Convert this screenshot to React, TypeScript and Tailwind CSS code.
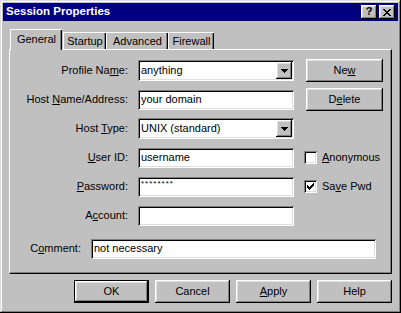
import React from "react";

const raised =
  "shadow-[inset_-1px_-1px_#000,inset_1px_1px_#fff,inset_-2px_-2px_#808080,inset_2px_2px_#dfdfdf]";
const sunken =
  "shadow-[inset_1px_1px_#808080,inset_-1px_-1px_#fff,inset_2px_2px_#000,inset_-2px_-2px_#dfdfdf]";

function U({ c }: { c: string }) {
  return <span className="underline underline-offset-1">{c}</span>;
}

function Pixels({ w, h, px }: { w: number; h: number; px: [number, number][] }) {
  return (
    <svg width={w} height={h} viewBox={`0 0 ${w} ${h}`} shapeRendering="crispEdges">
      {px.map(([x, y], i) => (
        <rect key={i} x={x} y={y} width={1} height={1} fill="#000" />
      ))}
    </svg>
  );
}

const arrowPx: [number, number][] = [];
[7, 5, 3, 1].forEach((n, r) => {
  for (let i = 0; i < n; i++) arrowPx.push([r + i, r]);
});

const closePx: [number, number][] = [
  [0, 0], [1, 0], [6, 0], [7, 0],
  [1, 1], [2, 1], [5, 1], [6, 1],
  [2, 2], [3, 2], [4, 2], [5, 2],
  [3, 3], [4, 3],
  [2, 4], [3, 4], [4, 4], [5, 4],
  [1, 5], [2, 5], [5, 5], [6, 5],
  [0, 6], [1, 6], [6, 6], [7, 6],
];

const checkPx: [number, number][] = [
  [6, 0],
  [5, 1], [6, 1],
  [0, 2], [4, 2], [5, 2], [6, 2],
  [0, 3], [1, 3], [3, 3], [4, 3], [5, 3],
  [0, 4], [1, 4], [2, 4], [3, 4], [4, 4],
  [1, 5], [2, 5], [3, 5],
  [2, 6],
];

function Edit({ children, w = "w-[156px]" }: { children?: React.ReactNode; w?: string }) {
  return (
    <div className={`flex h-[20px] items-center bg-white pl-[3px] ${sunken} ${w}`}>
      {children}
    </div>
  );
}

function Combo({ value }: { value: string }) {
  return (
    <div className={`flex h-[21px] w-[156px] bg-white p-[2px] ${sunken}`}>
      <div className="flex flex-1 items-center pl-[1px]">{value}</div>
      <div className={`flex h-[17px] w-[16px] items-center justify-center bg-[#c0c0c0] ${raised}`}>
        <Pixels w={7} h={4} px={arrowPx} />
      </div>
    </div>
  );
}

function Btn({
  children,
  w = "w-[75px]",
  def = false,
}: {
  children: React.ReactNode;
  w?: string;
  def?: boolean;
}) {
  return (
    <div
      className={`flex h-[23px] items-center justify-center bg-[#c0c0c0] ${w} ${
        def ? "border border-black" : ""
      } ${raised}`}
    >
      {children}
    </div>
  );
}

function Check({ checked, children }: { checked?: boolean; children: React.ReactNode }) {
  return (
    <div className="ml-[10px] flex items-center">
      <div className={`flex h-[13px] w-[13px] items-center justify-center bg-white ${sunken}`}>
        {checked && <Pixels w={7} h={7} px={checkPx} />}
      </div>
      <div className="ml-[5px]">{children}</div>
    </div>
  );
}

function Row({
  label,
  children,
  right,
}: {
  label: React.ReactNode;
  children: React.ReactNode;
  right?: React.ReactNode;
}) {
  return (
    <div className="flex h-[29px] items-center">
      <div className="w-[118px] text-right">{label}</div>
      <div className="ml-[10px]">{children}</div>
      {right}
    </div>
  );
}

export default function App() {
  return (
    <div
      className="flex h-[313px] w-[401px] flex-col bg-[#c0c0c0] p-[3px] text-[11px] leading-none text-black shadow-[inset_-1px_-1px_#000,inset_1px_1px_#dfdfdf,inset_-2px_-2px_#808080,inset_2px_2px_#fff]"
      style={{ fontFamily: '"Liberation Sans", Arial, sans-serif' }}
    >
      {/* Title bar */}
      <div className="flex h-[18px] items-center bg-[#000080] pl-[3px] pr-[3px]">
        <div className="flex-1 text-[11.5px] font-bold text-white">Session Properties</div>
        <div className={`flex h-[14px] w-[16px] items-center justify-center bg-[#c0c0c0] text-[11px] font-bold ${raised}`}>
          <span className="-mt-[1px]">?</span>
        </div>
        <div className={`ml-[2px] flex h-[14px] w-[16px] items-center justify-center bg-[#c0c0c0] ${raised}`}>
          <Pixels w={8} h={7} px={closePx} />
        </div>
      </div>

      {/* Tabs */}
      <div className="ml-[6px] mt-[8px] flex h-[20px] w-[383px] items-end">
        <div className="relative z-10 -mb-[1px] ml-[1px] flex h-[21px] w-[52px] items-center justify-center border-l border-t border-white bg-[#c0c0c0] pb-[2px] shadow-[inset_-1px_0_#000,inset_-2px_0_#808080]">
          General
        </div>
        <div className="ml-[1px] flex h-[17px] w-[43px] items-center justify-center border-l border-t border-white shadow-[inset_-1px_0_#000,inset_-2px_0_#808080]">
          Startup
        </div>
        <div className="flex h-[17px] w-[62px] items-center justify-center border-l border-t border-white shadow-[inset_-1px_0_#000,inset_-2px_0_#808080]">
          Advanced
        </div>
        <div className="flex h-[17px] w-[46px] items-center justify-center border-l border-t border-white shadow-[inset_-1px_0_#000,inset_-2px_0_#808080]">
          Firewall
        </div>
      </div>

      {/* Panel */}
      <div className="ml-[6px] flex h-[225px] w-[383px] flex-col border-b border-l border-r border-t border-b-black border-l-white border-r-black border-t-white pt-[6px] shadow-[inset_-1px_-1px_#808080]">
        <Row
          label={
            <>
              Profile Na<U c="m" />e:
            </>
          }
          right={
            <div className="ml-[12px]">
              <Btn w="w-[77px]">
                <span>
                  Ne<U c="w" />
                </span>
              </Btn>
            </div>
          }
        >
          <Combo value="anything" />
        </Row>
        <Row
          label={
            <>
              Host <U c="N" />ame/Address:
            </>
          }
          right={
            <div className="ml-[12px]">
              <Btn w="w-[77px]">
                <span>
                  D<U c="e" />lete
                </span>
              </Btn>
            </div>
          }
        >
          <Edit>your domain</Edit>
        </Row>
        <Row
          label={
            <>
              Host <U c="T" />ype:
            </>
          }
        >
          <Combo value="UNIX (standard)" />
        </Row>
        <Row
          label={
            <>
              <U c="U" />ser ID:
            </>
          }
          right={
            <Check>
              <U c="A" />nonymous
            </Check>
          }
        >
          <Edit>username</Edit>
        </Row>
        <Row
          label={
            <>
              <U c="P" />assword:
            </>
          }
          right={
            <Check checked>
              Sa<U c="v" />e Pwd
            </Check>
          }
        >
          <Edit>
            <span className="-mt-[5px] text-[8px] tracking-[1px]">********</span>
          </Edit>
        </Row>
        <Row
          label={
            <>
              A<U c="c" />count:
            </>
          }
        >
          <Edit />
        </Row>
        <div className="mt-[4px] flex h-[29px] items-center">
          <div className="w-[71px] text-right">
            C<U c="o" />mment:
          </div>
          <div className="ml-[10px]">
            <Edit w="w-[285px]">not necessary</Edit>
          </div>
        </div>
      </div>

      {/* Bottom buttons */}
      <div className="ml-[6px] mt-[6px] flex w-[383px] justify-end gap-[6px]">
        <Btn def>OK</Btn>
        <Btn>Cancel</Btn>
        <Btn>
          <span>
            <U c="A" />pply
          </span>
        </Btn>
        <Btn>Help</Btn>
      </div>
    </div>
  );
}
